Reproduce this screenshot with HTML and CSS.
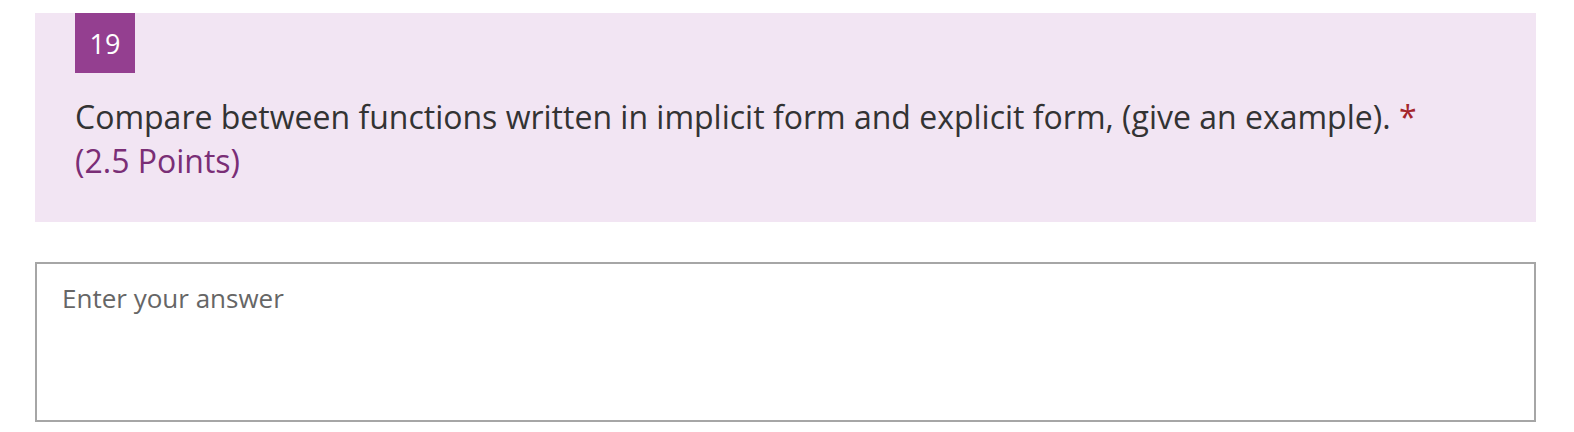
FILE: index.html
```html
<!DOCTYPE html>
<html>
<head>
<meta charset="utf-8">
<link rel="stylesheet" href="styles.css">
</head>
<body>
<div class="page">
  <div class="question">
    <div class="badge">19</div>
    <div class="title">Compare between functions written in implicit form and explicit form, (give an example). <span class="req">*</span><br><span class="points">(2.5 Points)</span></div>
  </div>
  <div class="answer"><span class="placeholder">Enter your answer</span></div>
</div>
</body>
</html>
```
FILE: styles.css
```css
html, body { margin: 0; padding: 0; background: #fff; }
body { font-family: "Open Sans", "Noto Sans", sans-serif; }
.page { padding: 13px 38px 0 35px; }
.question {
  background: #f2e5f3;
  padding: 0 40px 0 40px;
  height: 209px;
  box-sizing: border-box;
}
.badge {
  width: 60px; height: 60px;
  background: #943f90;
  color: #fff;
  font-size: 27px;
  display: flex; align-items: center; justify-content: center;
}
.title {
  margin-top: 22px;
  font-size: 32px;
  line-height: 44px;
  color: #333;
}
.req { color: #a4262c; }
.points { color: #7a2e76; }
.answer {
  margin-top: 40px;
  height: 160px;
  border: 2px solid #a6a6a6;
  box-sizing: border-box;
  padding: 16px 25px;
}
.placeholder { color: #666; font-size: 26px; line-height: 36px; }
```
